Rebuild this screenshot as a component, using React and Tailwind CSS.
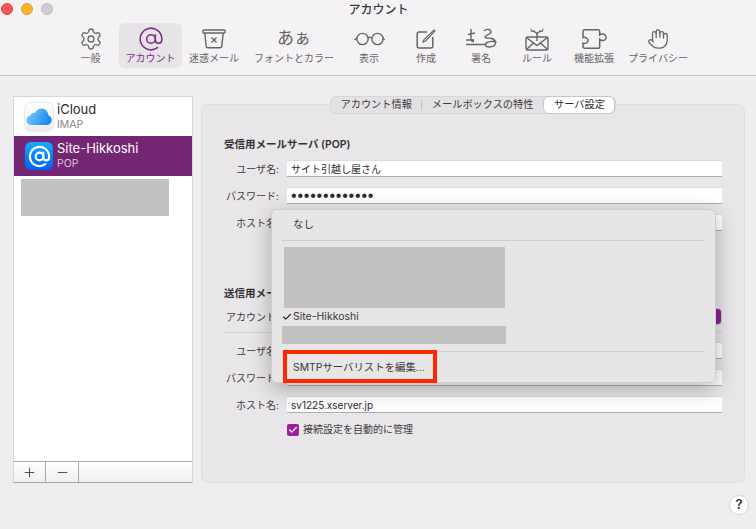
import { Settings, AtSign, Hand, Check, Plus, Minus } from "lucide-react";

const ICON = "#666466";

const BinIcon = () => (
  <svg width="24" height="20" viewBox="0 0 24 20" fill="none" stroke={ICON} strokeWidth="1.4">
    <rect x="0.8" y="1" width="22.4" height="3" rx="1.2" />
    <path d="M2.8 4l1.4 13.2c.1.9.8 1.6 1.7 1.6h12.2c.9 0 1.6-.7 1.7-1.6L21.2 4" />
    <path d="M9.5 8.5l5 5M14.5 8.5l-5 5" />
  </svg>
);

const GlassesIcon = () => (
  <svg width="31" height="14" viewBox="0 0 31 14" fill="none" stroke={ICON} strokeWidth="1.4">
    <circle cx="8.5" cy="7" r="5.6" />
    <circle cx="23.5" cy="7" r="5.6" />
    <path d="M14 6c1-1 2-1 3 0M3 6L.5 8M29 6l1.5 2" />
  </svg>
);

const ComposeIcon = () => (
  <svg width="20" height="20" viewBox="0 0 20 20" fill="none" stroke={ICON} strokeWidth="1.5">
    <path d="M11 3H3.2C2 3 1.2 3.8 1.2 5v12c0 1.2.8 2 2 2h11.6c1.200 0 2-.8 2-2V8" />
    <path d="M7 13l1-2.500L18 1l1 1-9.500 10z" strokeWidth="1.1" />
  </svg>
);

const SignIcon = () => (
  <svg width="31" height="22" viewBox="0 0 31 22" fill="none" stroke={ICON} strokeWidth="1.4">
    <path d="M0 12h8M5 1v10c0 2 1 2.500 3 2.500M0 16.500h20" />
    <path d="M2 6.500l7-1.500M18 3c2-2.500 7-2 7 .8s-6 3.200-6 5.200 5 .5 7 1.500 4.500 3 3 6-9 3.500-9.500.5 5-4.500 11-3" />
  </svg>
);

const RuleIcon = () => (
  <svg width="24" height="24" viewBox="0 0 24 24" fill="none" stroke={ICON} strokeWidth="1.4">
    <rect x="1" y="10" width="22" height="13" rx="1.500" />
    <path d="M1.500 10.500L12 18.500l10.500-8M1.500 22.500l7.500-7M22.500 22.500l-7.500-7" />
    <path d="M12 14V7.500C12 5.500 10 5 7.500 3.500M12 7.500c0-2 2-2.500 4.500-4" />
    <path d="M6 1.500l.5 3 3-.5M18 1.500l-.5 3-3-.5" strokeWidth="1" />
  </svg>
);

const PuzzleIcon = () => (
  <svg width="25" height="20" viewBox="0 0 25 20" fill="none" stroke={ICON} strokeWidth="1.5">
    <path d="M1 2.500C1 1.500 1.700.8 2.700.8H16c1 0 1.700.7 1.700 1.700V6c2-1.500 5-1.200 6 .8 1 2.200-.2 4.200-2 4.600-1.500.3-3-.2-4-1v7c0 1-.7 1.800-1.700 1.800H2.700c-1 0-1.700-.8-1.700-1.800v-3.300c2.200 1 5-.1 5-2.600S3.200 7.800 1 8.500z" />
  </svg>
);

const CloudIcon = () => (
  <svg width="26" height="17" viewBox="0 0 26 17">
    <defs>
      <linearGradient id="cloudFill" x1="0" y1="0" x2="1" y2="0.3">
        <stop offset="0" stopColor="#7ed0fb" />
        <stop offset="1" stopColor="#1f8bee" />
      </linearGradient>
    </defs>
    <path
      fill="url(#cloudFill)"
      d="M5.500 17C2.500 17 .5 15 .5 12.300c0-2.400 1.700-4.300 4-4.700C5.200 5.500 7 4.500 9 5c1.200-2.800 3.700-4.500 6.500-4.500 3.800 0 6.800 3 6.800 6.800 2 .7 3.400 2.500 3.400 4.700 0 2.800-2.100 5-5 5z"
    />
  </svg>
);

const tools = [
  { label: "一般", w: "w-[57px]", icon: <Settings size={24} strokeWidth={1.3} color={ICON} /> },
  { label: "アカウント", w: "w-[63px]", active: true, icon: <AtSign size={26} strokeWidth={1.4} color="#7e2a86" /> },
  { label: "迷惑メール", w: "w-[64px]", icon: <BinIcon /> },
  { label: "フォントとカラー", w: "w-[96px]", icon: <span className="text-[17px] leading-none text-[#666466]">あぁ</span> },
  { label: "表示", w: "w-[54px]", icon: <GlassesIcon /> },
  { label: "作成", w: "w-[60px]", icon: <ComposeIcon /> },
  { label: "署名", w: "w-[50px]", icon: <SignIcon /> },
  { label: "ルール", w: "w-[62px]", icon: <RuleIcon /> },
  { label: "機能拡張", w: "w-[52px]", icon: <PuzzleIcon /> },
  { label: "プライバシー", w: "w-[76px]", icon: <Hand size={22} strokeWidth={1.4} color={ICON} /> },
];

const Row = ({ label, className = "", children }) => (
  <div className={`flex items-center gap-2 h-[17px] ${className}`}>
    <div className="w-[55px] pt-px text-right whitespace-nowrap flex justify-end">{label}</div>
    {children}
  </div>
);

const Field = ({ children }) => (
  <div className="flex-1 h-[17px] pt-px bg-white border-t border-t-[#dcdadc] border-b border-b-[#aeacae] px-1 flex items-center text-[#2e2c2e] text-[10px]">
    {children}
  </div>
);

export default function App() {
  return (
    <div className="relative w-[756px] h-[529px] overflow-hidden bg-[#efedf0] text-[10px] text-[#3c3a3c] font-['Inter','Noto_Sans_CJK_JP',sans-serif]">

      {/* TITLE + TOOLBAR */}
      <div className="h-[76px] bg-[#f4f2f5] border-b border-[#c8c6c8] flex flex-col">
        <div className="relative h-[18px] pt-px flex items-center justify-center">
          <div className="absolute left-px top-[3px] flex gap-2">
            <span className="w-3 h-3 rounded-full bg-[#fd5754] border border-[#e0443e]"></span>
            <span className="w-3 h-3 rounded-full bg-[#fdb32b] border border-[#dea123]"></span>
            <span className="w-3 h-3 rounded-full bg-[#cfcdcf] border border-[#bdbbbd]"></span>
          </div>
          <span className="text-xs font-medium text-[#3a383a] ml-[1px]">アカウント</span>
        </div>
        <div className="flex pl-[62px] pt-[5px]">
          {tools.map((t) => (
            <div
              key={t.label}
              className={`${t.w} h-[45px] flex flex-col items-center rounded-md ${t.active ? "bg-[#e6e4e6] text-[#7e2a86]" : "text-[#666466]"}`}
            >
              <div className="h-[28px] flex items-center justify-center pt-[3px]">{t.icon}</div>
              <div className="text-[10px] leading-3 mt-[1px] whitespace-nowrap">{t.label}</div>
            </div>
          ))}
        </div>
      </div>

      <div className="flex gap-2 pl-[13px] pr-[11px] pt-5">

        {/* ACCOUNT LIST */}
        <div className="w-[180px] h-[387px] flex flex-col bg-white border border-[#d8d6d8] border-b-[#aaa8aa]">
          <div className="h-[39px] flex items-center gap-1 pl-[11px]">
            <div className="w-[28px] h-[28px] rounded-md bg-gradient-to-b from-white to-[#ececec] shadow-[0_0_2px_rgba(0,0,0,0.3)] flex items-center justify-center">
              <CloudIcon />
            </div>
            <div>
              <div className="text-[13px] leading-[15px] text-[#2b2b2b]">iCloud</div>
              <div className="text-[10.500px] leading-[15px] text-[#8a888a]">IMAP</div>
            </div>
          </div>
          <div className="h-[40px] flex items-center gap-1 pl-[11px] bg-[#732673]">
            <div className="w-[28px] h-[28px] rounded-md bg-gradient-to-b from-[#1ea9ff] to-[#0a5cf5] flex items-center justify-center">
              <AtSign size={23} strokeWidth={2.2} color="#fff" />
            </div>
            <div>
              <div className="text-[13px] leading-[15px] text-white">Site-Hikkoshi</div>
              <div className="text-[10.500px] leading-[15px] text-[#d9bfd9]">POP</div>
            </div>
          </div>
          <div className="ml-[7px] mt-[3px] w-[148px] h-[37px] bg-[#c2c2c2]"></div>
          <div className="flex-1"></div>
          <div className="h-[21px] flex border-t border-[#aaa8aa] bg-gradient-to-b from-white to-[#f0eff0]">
            <div className="w-[32px] border-r border-[#aaa8aa] flex items-center justify-center">
              <Plus size={15} strokeWidth={1.3} color="#2e2c2e" />
            </div>
            <div className="w-[33px] border-r border-[#aaa8aa] flex items-center justify-center">
              <Minus size={15} strokeWidth={1.3} color="#2e2c2e" />
            </div>
          </div>
        </div>

        {/* SETTINGS PANEL */}
        <div className="flex-1 h-[379px] mt-2 bg-[#e9e6e9] border border-[#e2dfe2] rounded-md px-[22px]">
          <div className="flex justify-center -mt-[9px]">
            <div className="h-[18px] flex items-center bg-[#e3e1e3] rounded-md border border-[#d8d6d8] text-[10.200px] text-[#3c3a3c]">
              <div className="pl-[10px] pr-[9px]">アカウント情報</div>
              <div className="w-px h-[10px] bg-[#c4c2c4]"></div>
              <div className="px-[10px]">メールボックスの特性</div>
              <div className="h-[18px] -my-px bg-white border border-[#c8c6c8] rounded-md flex items-center text-[#2e2c2e] w-[72px] justify-center">サーバ設定</div>
            </div>
          </div>

          <div className="mt-[23px] h-4 flex items-center font-semibold text-[10.500px] text-[#333133]">受信用メールサーバ (POP)</div>
          <Row label="ユーザ名:" className="mt-[7px]">
            <Field>サイト引越し屋さん</Field>
          </Row>
          <Row label="パスワード:" className="mt-[10px]">
            <Field><span className="text-[16px] leading-none tracking-[0.800px] font-['Liberation_Sans',sans-serif]">•••••••••••••</span></Field>
          </Row>
          <Row label="ホスト名:" className="mt-[10px]">
            <Field></Field>
          </Row>

          <div className="mt-[55px] h-4 flex items-center font-semibold text-[10.500px] text-[#333133]">送信用メールサーバ</div>
          <Row label="アカウント:" className="mt-[6px]">
            <div className="flex-1 h-[17px] bg-white rounded-[3px] border border-[#d0ced0] flex justify-end">
              <div className="w-[16px] bg-[#8e1f94] rounded-r-[3px]"></div>
            </div>
          </Row>
          <div className="mt-[7px] h-px bg-[#d3d1d3]"></div>
          <Row label="ユーザ名:" className="mt-[9px]">
            <Field></Field>
          </Row>
          <Row label="パスワード:" className="mt-[10px]">
            <Field></Field>
          </Row>
          <Row label="ホスト名:" className="mt-[10px]">
            <Field>sv1225.xserver.jp</Field>
          </Row>
          <div className="ml-[63px] mt-[9px] flex items-center gap-1">
            <div className="w-3 h-3 rounded-[2px] bg-[#9a209f] flex items-center justify-center">
              <Check size={10} strokeWidth={3} color="#fff" />
            </div>
            <span>接続設定を自動的に管理</span>
          </div>
        </div>
      </div>

      {/* HELP */}
      <div className="absolute left-[729px] top-[495px] w-5 h-5 rounded-full bg-white border border-[#d4d2d4] flex items-center justify-center text-[13px] font-semibold text-[#2e2c2e]">?</div>

      {/* POPUP MENU */}
      <div className="absolute left-[271px] top-[209px] w-[445px] h-[174px] bg-[#e8e5e6] border border-[#cfcdcf] rounded-md shadow-[0_6px_22px_rgba(0,0,0,0.28)] text-[#3a383a] text-[10.500px]">
        <div className="h-[30px] pl-[21px] flex items-center">なし</div>
        <div className="mx-[10px] h-px bg-[#cfcccd]"></div>
        <div className="ml-[12px] mt-[6px] w-[221px] h-[61px] bg-[#c2c2c2]"></div>
        <div className="h-[18px] flex items-center pl-[10px]">
          <Check size={10} strokeWidth={3} color="#2e2c2e" className="mr-[1px]" />
          <span>Site-Hikkoshi</span>
        </div>
        <div className="ml-[10px] w-[224px] h-[18px] bg-[#c2c2c2]"></div>
        <div className="mx-[10px] mt-[7px] h-px bg-[#cfcccd]"></div>
        <div className="pl-[21px] mt-[8px] text-[10.400px]">SMTPサーバリストを編集...</div>

        {/* RED HIGHLIGHT */}
        <div className="absolute left-[11px] top-[140px] w-[154px] h-[33px] border-[4px] border-[#ff2600]"></div>
      </div>
    </div>
  );
}
